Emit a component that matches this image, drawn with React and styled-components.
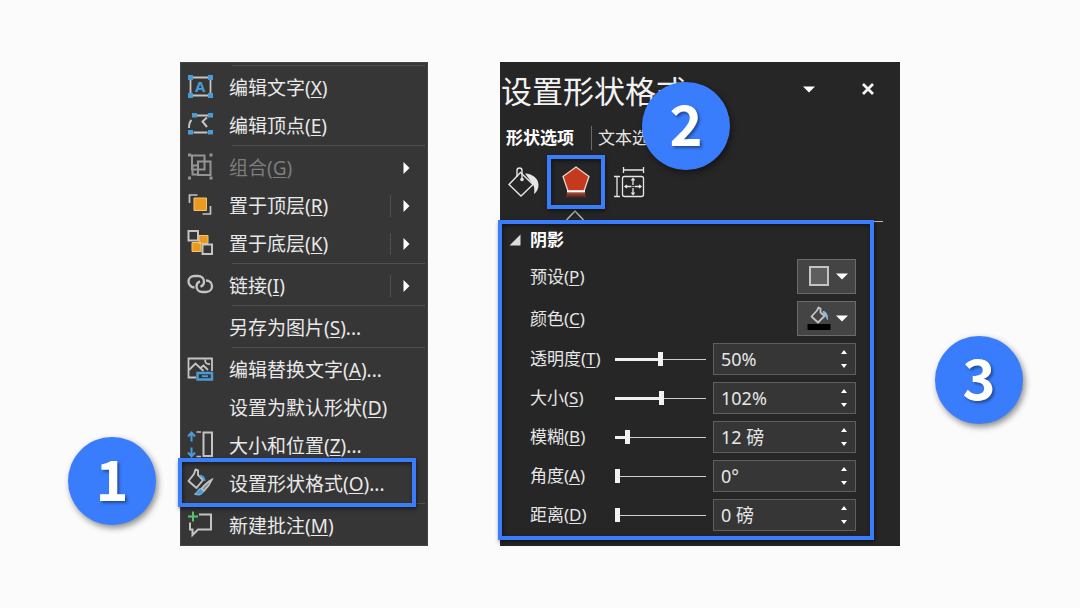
import React, { useState } from "react";
import styled, { createGlobalStyle, css } from "styled-components";

const BLUE = "#397dfc";
const FONT = '"Noto Sans", "Noto Sans CJK SC", sans-serif';

const GlobalStyle = createGlobalStyle`
  *, *::before, *::after {
    box-sizing: border-box;
  }
  body {
    margin: 0;
    background: #fbfbfb;
    font-family: ${FONT};
  }
  button, input {
    font: inherit;
    color: inherit;
  }
  button {
    padding: 0;
    border: none;
    background: none;
    cursor: pointer;
  }
  svg {
    display: block;
    overflow: visible;
  }
  u {
    text-decoration-thickness: 1px;
    text-underline-offset: 2px;
  }
`;

const Page = styled.main`
  min-height: 100vh;
  display: flex;
  justify-content: center;
  align-items: center;
`;

const Stage = styled.div`
  width: 100%;
  max-width: 720px;
  display: grid;
  grid-template-columns: minmax(0, 248fr) minmax(0, 400fr);
  gap: 72px;
`;

// numbered step marker, floats over the panels
const Badge = styled.span`
  position: absolute;
  z-index: 3;
  left: ${(p) => p.$x}px;
  top: ${(p) => p.$y}px;
  width: 88px;
  height: 88px;
  border-radius: 50%;
  background: ${BLUE};
  color: #fff;
  font-family: "Noto Sans CJK SC", sans-serif;
  font-size: 56px;
  font-weight: 700;
  line-height: 80px;
  text-align: center;
  text-shadow: 2px 2px 3px rgba(0, 0, 0, 0.4);
  box-shadow: 2px 3px 6px rgba(0, 0, 0, 0.45);
`;

const outline = css`
  content: "";
  position: absolute;
  z-index: 2;
  border: 4px solid ${BLUE};
  box-shadow: 1px 2px 4px rgba(0, 0, 0, 0.5),
    inset 1px 2px 4px rgba(0, 0, 0, 0.5);
  pointer-events: none;
`;

/* ---------- context menu ---------- */

const Menu = styled.nav`
  position: relative;
  padding: 3px 0 1px;
  background: #363636;
  box-shadow: inset 0 0 0 1px #454545;
  color: #e9e9e9;
`;

const Separator = styled.hr`
  height: 4px;
  margin: 0 3px 0 52px;
  border: none;
  border-top: 1px solid #505050;
`;

const MenuItem = styled.button`
  position: relative;
  width: 100%;
  height: 38px;
  padding-left: 7px;
  display: flex;
  align-items: center;
  gap: 16px;
  font-size: 19px;
  line-height: 26px;
  text-align: left;
  white-space: nowrap;
  color: ${(p) => (p.$muted ? "#7d7d7d" : "inherit")};

  ${(p) =>
    p.$marked &&
    css`
      &::after {
        ${outline}
        inset: -7px 12px -4px -2px;
      }
    `}
`;

const IconSlot = styled.span`
  flex: 0 0 26px;
  height: 26px;
`;

const ItemText = styled.span`
  flex: 1;
`;

const SubArrow = styled.span`
  flex: 0 0 38px;
  height: 22px;
  padding-left: 12px;
  display: flex;
  align-items: center;
  border-left: 1px solid ${(p) => (p.$split ? "#505050" : "transparent")};
`;

const GRAY = "#c4c4c4";
const SKY = "#4a9bd4";

const Svg26 = ({ children }) => (
  <svg width="26" height="26" viewBox="0 0 26 26" fill="none">
    {children}
  </svg>
);

const icons = {
  editText: (
    <Svg26>
      <path d="M3.5 4v15M23.5 4v15M5 2.5h17M5 20.5h17" stroke={GRAY} strokeWidth="1.8" />
      <path d="M1 0h5v5H1zM21 0h5v5h-5zM1 18h5v5H1zM21 18h5v5h-5z" fill={SKY} />
      <text x="13.3" y="17" fontSize="15" fontWeight="700" textAnchor="middle" fill={SKY}>A</text>
    </Svg26>
  ),
  editPoints: (
    <Svg26>
      <path d="M10 2.500h11M6.500 19.500h14M4.500 7C2.500 9 2 11.500 2 15M20 4.500L15.500 8.500L20 14" stroke={GRAY} strokeWidth="2" />
      <path d="M5 0h5v4.500H5zM21 0h5v4.500h-5zM1 17h5v4.500H1zM21 17h5v4.500h-5z" fill={SKY} />
    </Svg26>
  ),
  group: (
    <Svg26>
      <g stroke="#949494" strokeWidth="2">
        <path d="M5 .5h12.500v14H5zM11 6.500h12.500v13.500H11z" />
        <path d="M11 10.500H5.500v9H11" />
      </g>
      <path d="M1-1.500h3v3H1zM22.500-1.500h3v3h-3zM1 21.500h3v3H1zM22.500 21.500h3v3h-3z" fill="#949494" />
    </Svg26>
  ),
  bringFront: (
    <Svg26>
      <path d="M2.500 10V2h8M15.500 21h8v-8" stroke={GRAY} strokeWidth="1.700" />
      <path d="M7 5h12.500v12.500H7z" fill="#e99a1f" stroke="#f6c46f" />
    </Svg26>
  ),
  sendBack: (
    <Svg26>
      <path d="M12 4.500h9v8h-9zM5 11.500h9v9H5z" fill="#e99a1f" stroke="#f6c46f" />
      <path d="M1.500 0h9.500v9.500H1.500zM15.500 13.500H25V23h-9.500z" fill="#363636" stroke={GRAY} strokeWidth="2" />
    </Svg26>
  ),
  link: (
    <Svg26>
      <g stroke={GRAY} strokeWidth="2.300">
        <path d="M7.500 14.500C4 14.500 1.500 11.500 1.500 8.500S4 3 7.500 3H11c3.500 0 6 2.500 6 5.700 0 2.500-1.500 4.300-3.500 5" />
        <path d="M19 7.500c3.500 0 6 2.500 6 5.700S22.500 19 19 19h-3.500c-3.500 0-6-2.500-6-5.700 0-2.500 1.500-4.300 3.500-5" />
      </g>
    </Svg26>
  ),
  altText: (
    <Svg26>
      <path d="M9 20.500H1.500v-19h23.500V14" stroke={GRAY} strokeWidth="1.800" />
      <path d="M2 13L8.500 6.500L16.500 14M13.500 11l3-2.500L21 13" stroke={GRAY} strokeWidth="1.800" />
      <path d="M18.500 2.500c-1.500 2.500 1 5 4.500 4.500" stroke={GRAY} strokeWidth="1.800" />
      <path d="M10.500 16h14.500v6.500H10.500z" fill="#363636" stroke={SKY} strokeWidth="2.400" />
      <path d="M15 19.200h6" stroke={SKY} strokeWidth="1.800" />
    </Svg26>
  ),
  sizePos: (
    <Svg26>
      <path d="M4.500-.5v9M1 3.500l3.500-4 3.500 4M4.500 14.500v9M1 19.500l3.500 4 3.500-4" stroke={SKY} strokeWidth="2" />
      <path d="M9.500-1h4.500M9.500 23.500h4.500" stroke={GRAY} strokeWidth="1.500" />
      <path d="M16.500-.5H25v23.500h-8.500z" stroke={GRAY} strokeWidth="2" />
    </Svg26>
  ),
  format: (
    <Svg26>
      <path d="M7 3L1.500 10l8 7 6.500-8-5-5V-.5L8.500-1.500z" stroke={GRAY} strokeWidth="1.900" strokeLinejoin="round" />
      <path d="M12.500 4.500c3.500.5 5 2 5 5.500" stroke={SKY} strokeWidth="2" />
      <path d="M25 8.500c-3 1.500-8 6-10.500 9l2.500 2.500C20 17 23.500 12 25 8.500z" fill="#8a8a8a" stroke={GRAY} strokeWidth="1.600" />
      <path d="M13.500 17.500c-3 .5-2.500 4-6 5.500 4 2 8.500.5 9-3z" fill={SKY} stroke="#8cc5ec" />
    </Svg26>
  ),
  comment: (
    <Svg26>
      <path d="M12 1.500h12v15H11l-5.500 5.500v-5.500H3V9.500" stroke={GRAY} strokeWidth="2" />
      <path d="M6-1.500v10M1 3.500h10" stroke="#58c470" strokeWidth="2" />
    </Svg26>
  ),
};

const menuGroups = [
  [
    { icon: "editText", text: "编辑文字", hotkey: "X" },
    { icon: "editPoints", text: "编辑顶点", hotkey: "E" },
  ],
  [
    { icon: "group", text: "组合", hotkey: "G", muted: true, sub: true },
    { icon: "bringFront", text: "置于顶层", hotkey: "R", sub: true, split: true },
    { icon: "sendBack", text: "置于底层", hotkey: "K", sub: true, split: true },
  ],
  [{ icon: "link", text: "链接", hotkey: "I", sub: true, split: true }],
  [{ text: "另存为图片", hotkey: "S", more: true }],
  [
    { icon: "altText", text: "编辑替换文字", hotkey: "A", more: true },
    { text: "设置为默认形状", hotkey: "D" },
    { icon: "sizePos", text: "大小和位置", hotkey: "Z", more: true },
    { icon: "format", text: "设置形状格式", hotkey: "O", more: true, marked: true },
  ],
  [{ icon: "comment", text: "新建批注", hotkey: "M" }],
];

const ContextMenu = () => (
  <Menu>
    {menuGroups.map((group, i) => (
      <React.Fragment key={i}>
        <Separator />
        {group.map((item) => (
          <MenuItem key={item.hotkey} type="button" $muted={item.muted} $marked={item.marked}>
            <IconSlot>{icons[item.icon]}</IconSlot>
            <ItemText>
              {item.text}(<u>{item.hotkey}</u>){item.more && "..."}
            </ItemText>
            {item.sub && (
              <SubArrow $split={item.split}>
                <svg width="7" height="12" viewBox="0 0 7 12">
                  <path d="M0.500 0L6.500 6L0.500 12z" fill="#fff" />
                </svg>
              </SubArrow>
            )}
          </MenuItem>
        ))}
      </React.Fragment>
    ))}
    <Badge $x={-112} $y={375}>1</Badge>
  </Menu>
);

/* ---------- format pane ---------- */

const Pane = styled.section`
  position: relative;
  display: flex;
  flex-direction: column;
  background: #262626;
  color: #e6e6e6;
  white-space: nowrap;
`;

const PaneHeader = styled.header`
  height: 58px;
  padding: 0 20px 0 1px;
  display: flex;
  align-items: center;
  gap: 35px;
`;

const PaneTitle = styled.h1`
  flex: 1;
  margin: 0;
  font-size: 31px;
  font-weight: 400;
  line-height: 40px;
  color: #f2f2f2;
`;

const HeaderButton = styled.button`
  width: 24px;
  height: 28px;
  padding-bottom: 4px;
  display: grid;
  place-items: center;
`;

const Tabs = styled.div`
  height: 35px;
  padding-left: 6px;
  display: flex;
  align-items: center;
`;

const Tab = styled.button`
  font-size: 17px;
  line-height: 24px;
  font-weight: ${(p) => (p.$active ? 700 : 400)};
  color: ${(p) => (p.$active ? "#fff" : "#e6e6e6")};

  & + & {
    margin-left: 17px;
    padding-left: 6px;
    border-left: 1px solid #6a6a6a;
  }
`;

const IconBar = styled.div`
  height: 54px;
  padding-left: 7px;
  display: flex;
  align-items: center;
  gap: 8px;
`;

const IconTab = styled.button`
  position: relative;
  width: ${(p) => (p.$marked ? 58 : 32)}px;
  height: 54px;
  display: grid;
  place-items: center;

  ${(p) =>
    p.$marked &&
    css`
      &::after {
        ${outline}
        inset: 0;
      }
    `}
`;

const Pointer = styled.div`
  height: 13px;
  margin-right: 17px;
  padding: 1px 0 0 66px;
  border-bottom: 1px solid #bdbdbd;
`;

const Options = styled.div`
  position: relative;
  padding: 0 44px 9px 30px;
  display: flex;
  flex-direction: column;
  gap: 7px;
  font-size: 18px;

  &::after {
    ${outline}
    inset: -2px 26px 0 -2px;
  }
`;

const GroupToggle = styled.button`
  height: 30px;
  margin-left: -21px;
  padding-top: 6px;
  display: flex;
  align-items: center;
  gap: 9px;
  font-size: 17px;
  font-weight: 700;
  line-height: 24px;
  color: #fff;
`;

const Row = styled.div`
  display: flex;
  align-items: center;
  gap: 7px;
  height: ${(p) => (p.$tall ? 35 : 32)}px;
`;

const Label = styled.label`
  flex: ${(p) => (p.$wide ? "1" : "0 0 78px")};
  font-size: 17px;
  line-height: 24px;
`;

const PickerButton = styled.button`
  width: 59px;
  height: 35px;
  padding: 0 7px 0 9px;
  display: flex;
  align-items: center;
  justify-content: space-between;
  background: #444;
  border: 1px solid #6a6a6a;
`;

const Slider = styled.input`
  flex: 1;
  width: 0;
  min-width: 0;
  height: 14px;
  margin: 0;
  appearance: none;
  background: linear-gradient(#f0f0f0, #f0f0f0) left center / ${(p) => p.$fill}% 3px no-repeat,
    linear-gradient(#cfcfcf, #cfcfcf) left center / 100% 1px no-repeat;

  &::-webkit-slider-thumb {
    appearance: none;
    width: 5px;
    height: 14px;
    background: #f2f2f2;
  }
`;

const SpinBox = styled.div`
  flex: 0 0 143px;
  min-width: 0;
  height: 32px;
  display: flex;
  background: #363636;
  border: 1px solid #5f5f5f;
`;

const SpinInput = styled.input`
  flex: 1;
  width: 0;
  min-width: 0;
  padding: 0 0 0 7px;
  border: none;
  outline: none;
  background: none;
  line-height: 24px;
`;

const SpinButtons = styled.div`
  flex: 0 0 22px;
  display: flex;
  flex-direction: column;
  justify-content: space-between;
  padding: 4px 0;
`;

const SpinButton = styled.button`
  height: 8px;
  display: grid;
  place-items: center;
`;

const Caret = () => (
  <svg width="12" height="7" viewBox="0 0 12 7">
    <path d="M0 0.500h12L6 6.500z" fill="#fff" />
  </svg>
);

const sliders = [
  { id: "alpha", text: "透明度", hotkey: "T", value: 50, max: 100, unit: "%" },
  { id: "size", text: "大小", hotkey: "S", value: 102, max: 200, unit: "%" },
  { id: "blur", text: "模糊", hotkey: "B", value: 12, max: 100, unit: " 磅" },
  { id: "angle", text: "角度", hotkey: "A", value: 0, max: 359, unit: "°" },
  { id: "distance", text: "距离", hotkey: "D", value: 0, max: 200, unit: " 磅" },
];

const SliderRow = ({ id, text, hotkey, value: initial, max, unit }) => {
  const [value, setValue] = useState(initial);
  const step = (d) => setValue(Math.min(max, Math.max(0, value + d)));

  return (
    <Row>
      <Label htmlFor={id}>
        {text}(<u>{hotkey}</u>)
      </Label>
      <Slider
        type="range"
        aria-label={text}
        min="0"
        max={max}
        value={value}
        $fill={(value / max) * 100}
        onChange={(e) => setValue(Number(e.target.value))}
      />
      <SpinBox>
        <SpinInput
          id={id}
          value={`${value}${unit}`}
          onChange={(e) => setValue(parseInt(e.target.value, 10) || 0)}
        />
        <SpinButtons>
          <SpinButton type="button" aria-label={`${text} +`} onClick={() => step(1)}>
            <svg width="6" height="4" viewBox="0 0 6 4">
              <path d="M0 4h6L3 0z" fill="#fff" />
            </svg>
          </SpinButton>
          <SpinButton type="button" aria-label={`${text} -`} onClick={() => step(-1)}>
            <svg width="6" height="4" viewBox="0 0 6 4">
              <path d="M0 0h6L3 4z" fill="#fff" />
            </svg>
          </SpinButton>
        </SpinButtons>
      </SpinBox>
    </Row>
  );
};

const FormatPane = () => (
  <Pane>
    <PaneHeader>
      <PaneTitle>设置形状格式</PaneTitle>
      <HeaderButton type="button" aria-label="选项">
        <Caret />
      </HeaderButton>
      <HeaderButton type="button" aria-label="关闭">
        <svg width="12" height="12" viewBox="0 0 12 12">
          <path d="M1 1l10 10M11 1L1 11" stroke="#f2f2f2" strokeWidth="2.800" />
        </svg>
      </HeaderButton>
    </PaneHeader>

    <Tabs>
      <Tab type="button" $active>形状选项</Tab>
      <Tab type="button">文本选项</Tab>
    </Tabs>

    <IconBar>
      <IconTab type="button" aria-label="填充与线条">
        <svg width="32" height="32" viewBox="0 0 32 32" fill="none">
          <path d="M13.500 6.500L2 18.500l12 11.500 12-11.500z" stroke="#e6e6e6" strokeWidth="1.400" />
          <path d="M10 11V4.500a2.500 2.500 0 0 1 5 0V13" stroke="#e6e6e6" strokeWidth="1.400" />
          <circle cx="15" cy="13.500" r="1.800" fill="#e6e6e6" />
          <path d="M18 7.500c8 .5 13.500 5 13.500 11.500 0 3.500-1.500 7-4.500 9 .5-4 .5-7-1-9.500z" fill="#e6e6e6" />
        </svg>
      </IconTab>
      <IconTab type="button" aria-label="效果" $marked>
        <svg width="28" height="32" viewBox="0 0 28 32">
          <defs>
            <linearGradient id="mirror" x1="0" y1="0" x2="0" y2="1">
              <stop offset="0" stopColor="#c23a22" />
              <stop offset="1" stopColor="#262626" />
            </linearGradient>
          </defs>
          <path d="M14 1L27 10.500 22 25H6L1 10.500z" fill="#c5391f" stroke="#e8d5cf" strokeWidth="1.300" />
          <path d="M5 27h18l1.500 5H3.500z" fill="url(#mirror)" />
          <path d="M5 25.500h18" stroke="#fff" strokeWidth="2" />
        </svg>
      </IconTab>
      <IconTab type="button" aria-label="大小与属性">
        <svg width="32" height="32" viewBox="0 0 32 32" fill="none" stroke="#e6e6e6" strokeWidth="1.300">
          <rect x="9.500" y="10.500" width="21" height="20" rx="2" />
          <path d="M10.500 4h20M10.500 1v6M30.500 1v6M4 10.500v20M1 10.500h6M1 30.500h6" />
          <path d="M20 13v6M20 22v6M12.500 20.500h6M21.500 20.500h6M20 20v1" />
          <path d="M18.500 14.500l1.500-2 1.500 2M18.500 26.500l1.500 2 1.500-2M14 19l-2 1.500 2 1.500M26 19l2 1.500-2 1.500" />
        </svg>
      </IconTab>
    </IconBar>

    <Pointer>
      <svg width="18" height="11" viewBox="0 0 18 11" fill="none">
        <path d="M0.500 10L9 1l8.500 9" stroke="#bdbdbd" strokeWidth="1.300" />
      </svg>
    </Pointer>

    <Options>
      <GroupToggle type="button" aria-expanded="true">
        <svg width="12" height="12" viewBox="0 0 12 12">
          <path d="M11.500 0.500v11H0.500z" fill="#dcdcdc" />
        </svg>
        阴影
      </GroupToggle>
      <Row $tall>
        <Label $wide htmlFor="preset">
          预设(<u>P</u>)
        </Label>
        <PickerButton id="preset" type="button">
          <svg width="24" height="24" viewBox="0 0 24 24">
            <rect x="3" y="2" width="18" height="18" fill="#5e5e5e" stroke="#c4c4c4" strokeWidth="2" />
          </svg>
          <Caret />
        </PickerButton>
      </Row>
      <Row $tall>
        <Label $wide htmlFor="color">
          颜色(<u>C</u>)
        </Label>
        <PickerButton id="color" type="button">
          <svg width="24" height="24" viewBox="0 0 24 24" fill="none">
            <path d="M10 3.500L4.500 9.500l6.500 6 6.500-6.500-4-3.500V1.500L11.500.5z" stroke="#c4c4c4" strokeWidth="1.800" strokeLinejoin="round" />
            <path d="M16 4.500c3 0 4.500 2.500 4.500 8-1-2.500-2-4-4-5z" fill="#8fbbe0" stroke="#8fbbe0" />
            <path d="M0.500 17h23v6h-23z" fill="#000" />
          </svg>
          <Caret />
        </PickerButton>
      </Row>
      {sliders.map((s) => (
        <SliderRow key={s.id} {...s} />
      ))}
    </Options>

    <Badge $x={142} $y={20}>2</Badge>
    <Badge $x={435} $y={274}>3</Badge>
  </Pane>
);

const App = () => (
  <>
    <GlobalStyle />
    <Page>
      <Stage>
        <ContextMenu />
        <FormatPane />
      </Stage>
    </Page>
  </>
);

export default App;
